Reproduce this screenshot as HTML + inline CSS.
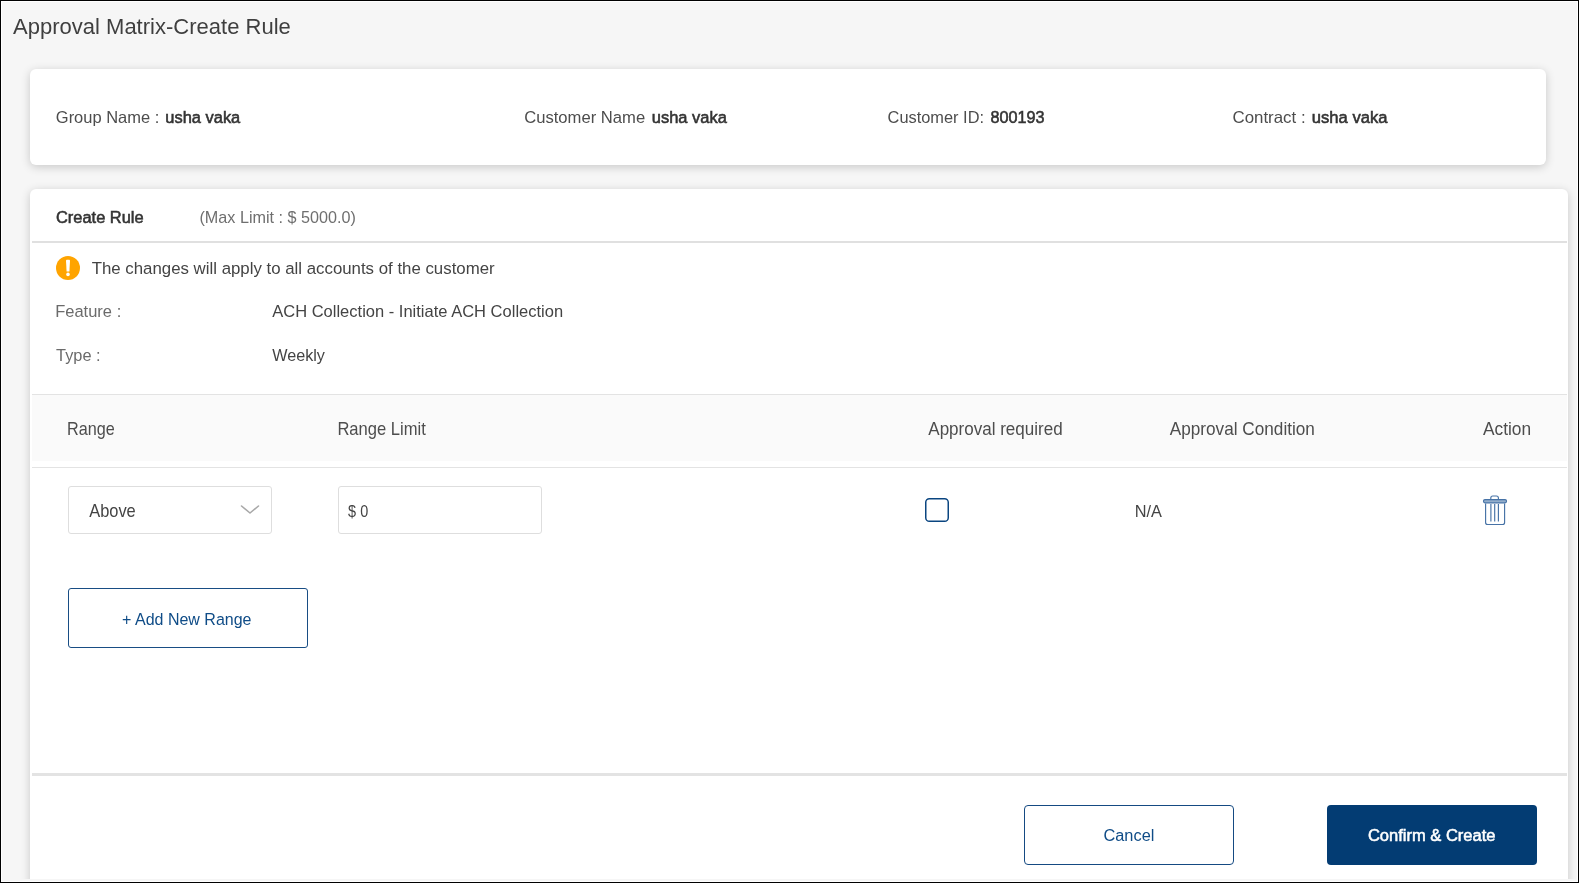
<!DOCTYPE html>
<html><head><meta charset="utf-8">
<style>
html,body{margin:0;padding:0;width:1579px;height:883px;overflow:hidden;background:#000;}
body{font-family:"Liberation Sans",sans-serif;position:relative;}
#inner{position:absolute;left:1px;top:1px;width:1577px;height:881px;box-sizing:border-box;border:1px solid #fff;background:#f6f6f6;overflow:hidden;}
#pg{position:absolute;left:-2px;top:-2px;width:1579px;height:883px;}
.abs{position:absolute;box-sizing:border-box;}
.card{position:absolute;background:#fff;border-radius:6px;box-shadow:0 2px 10px rgba(0,0,0,0.19);}
.line{position:absolute;background:#e0e0e0;}
svg{position:absolute;left:0;top:0;will-change:transform;}
text{font-family:"Liberation Sans",sans-serif;}
</style></head>
<body>
<div id="inner"><div id="pg">
<div class="abs" style="left:0;top:0;width:1579px;height:879px;overflow:hidden">
<div class="card" style="left:30px;top:69px;width:1516px;height:96px;"></div>
<div class="card" style="left:30px;top:189px;width:1538px;height:710px;"></div>
</div>
<div class="line" style="left:32px;top:241px;width:1535px;height:2px;"></div>
<div class="line" style="left:32px;top:394px;width:1535px;height:1px;background:#e3e3e3"></div>
<div class="abs" style="left:32px;top:395px;width:1535px;height:66px;background:#fafafa"></div>
<div class="line" style="left:32px;top:467px;width:1535px;height:1px;background:#e3e3e3"></div>
<div class="line" style="left:32px;top:773px;width:1535px;height:3px;background:#e3e3e3"></div>
<div class="abs" style="left:68px;top:486px;width:204px;height:48px;border:1px solid #dedede;border-radius:3px;background:#fff"></div>
<div class="abs" style="left:338px;top:486px;width:204px;height:48px;border:1px solid #dedede;border-radius:3px;background:#fff"></div>
<div class="abs" style="left:68px;top:588px;width:240px;height:60px;border:1px solid #184d84;border-radius:3px;"></div>
<div class="abs" style="left:1024px;top:805px;width:210px;height:60px;border:1.5px solid #154a82;border-radius:4px;"></div>
<div class="abs" style="left:1327px;top:805px;width:210px;height:60px;background:#033c73;border-radius:4px;"></div>
<svg width="1579" height="883" viewBox="0 0 1579 883">
<rect x="925.75" y="498.75" width="22.5" height="22.5" rx="3.6" fill="none" stroke="#0a4580" stroke-width="1.5"/>
<circle cx="68" cy="268" r="12" fill="#ffa400"/>
<path d="M66,260.6 Q66,259.8 66.8,259.8 H69.2 Q70,259.8 70,260.6 L69.4,271.4 H66.6 Z" fill="#fff"/>
<circle cx="68" cy="274.4" r="1.8" fill="#fff"/>
<polyline points="241.5,506 250,513 258.5,506" fill="none" stroke="#a8a8a8" stroke-width="1.6" stroke-linecap="round" stroke-linejoin="round"/>
<g fill="none" stroke="#4672a6" stroke-width="1.15">
<path d="M1490.8,499.5 v-1.5 a2,2 0 0 1 2,-2 h3.6 a2,2 0 0 1 2,2 v1.5"/>
<rect x="1483.5" y="499.6" width="23" height="3.2" rx="1.5" fill="#93aecb"/>
<path d="M1485.6,503.5 v19 a2,2 0 0 0 2,2 h15 a2,2 0 0 0 2,-2 v-19"/>
<path d="M1490.9,504 v17.5 M1494.7,504 v17.5 M1498.4,504 v17.5"/>
</g>
<text transform="translate(13.00,33.60) scale(0.9949,1)" font-size="22.14" fill="#3f3f3f">Approval Matrix-Create Rule</text>
<text transform="translate(55.81,122.80) scale(0.9872,1)" font-size="16.71" fill="#4d4d4d">Group Name :</text>
<text transform="translate(165.29,122.80) scale(1.0085,1)" font-size="16.32" stroke="#333333" stroke-width="0.55" fill="#333333">usha vaka</text>
<text transform="translate(524.20,122.80) scale(0.9953,1)" font-size="16.71" fill="#4d4d4d">Customer Name</text>
<text transform="translate(651.79,122.80) scale(1.0099,1)" font-size="16.32" stroke="#333333" stroke-width="0.55" fill="#333333">usha vaka</text>
<text transform="translate(887.62,122.80) scale(0.9803,1)" font-size="16.71" fill="#4d4d4d">Customer ID:</text>
<text transform="translate(990.60,122.80) scale(0.9916,1)" font-size="16.32" stroke="#333333" stroke-width="0.55" fill="#333333">800193</text>
<text transform="translate(1232.49,122.80) scale(1.0099,1)" font-size="16.71" fill="#4d4d4d">Contract :</text>
<text transform="translate(1311.78,122.80) scale(1.0181,1)" font-size="16.32" stroke="#333333" stroke-width="0.55" fill="#333333">usha vaka</text>
<text transform="translate(55.98,222.70) scale(1.0154,1)" font-size="16.18" stroke="#333333" stroke-width="0.55" fill="#333333">Create Rule</text>
<text transform="translate(199.42,222.70) scale(0.9771,1)" font-size="16.57" fill="#6f6f6f">(Max Limit : $ 5000.0)</text>
<text transform="translate(91.70,273.80) scale(0.9897,1)" font-size="17.00" fill="#444444">The changes will apply to all accounts of the customer</text>
<text transform="translate(55.14,317.00) scale(0.9722,1)" font-size="17.00" fill="#6b6b6b">Feature :</text>
<text transform="translate(272.20,316.80) scale(0.9885,1)" font-size="16.71" fill="#444444">ACH Collection - Initiate ACH Collection</text>
<text transform="translate(56.10,360.70) scale(0.9959,1)" font-size="16.43" fill="#6b6b6b">Type :</text>
<text transform="translate(272.20,360.70) scale(0.9843,1)" font-size="16.43" fill="#444444">Weekly</text>
<text transform="translate(67.12,435.10) scale(0.9152,1)" font-size="17.71" fill="#4d4d4d">Range</text>
<text transform="translate(337.39,435.10) scale(0.9366,1)" font-size="17.71" fill="#4d4d4d">Range Limit</text>
<text transform="translate(928.30,435.10) scale(0.9621,1)" font-size="17.71" fill="#4d4d4d">Approval required</text>
<text transform="translate(1169.80,435.10) scale(0.9703,1)" font-size="17.71" fill="#4d4d4d">Approval Condition</text>
<text transform="translate(1482.90,435.10) scale(0.9797,1)" font-size="17.71" fill="#4d4d4d">Action</text>
<text transform="translate(89.20,516.80) scale(0.9421,1)" font-size="17.43" fill="#444444">Above</text>
<text transform="translate(348.11,517.10) scale(0.9196,1)" font-size="15.71" fill="#444444">$ 0</text>
<text transform="translate(1134.63,516.70) scale(0.9770,1)" font-size="16.71" fill="#444444">N/A</text>
<text transform="translate(122.05,624.80) scale(0.9423,1)" font-size="17.00" fill="#0f4c87">+ Add New Range</text>
<text transform="translate(1103.44,840.80) scale(0.9467,1)" font-size="17.29" fill="#0f4c87">Cancel</text>
<text transform="translate(1367.90,840.70) scale(0.9873,1)" font-size="16.75" stroke="#ffffff" stroke-width="0.55" fill="#ffffff">Confirm &amp; Create</text>
</svg>
</div></div>
</body></html>
